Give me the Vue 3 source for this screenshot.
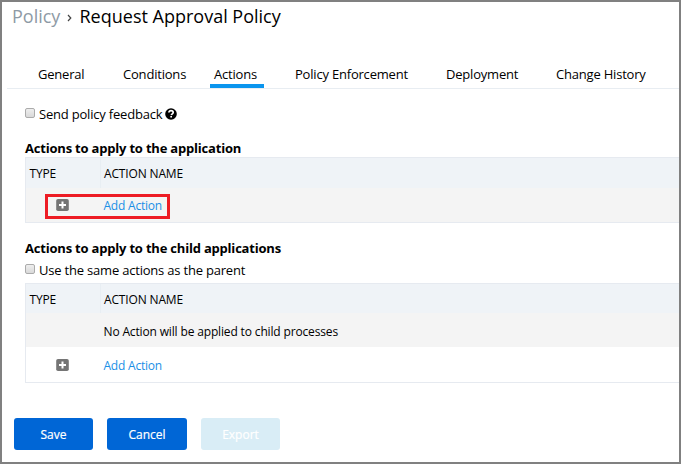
<script setup>
const tabs = [
  { id: 'general', label: 'General' },
  { id: 'conditions', label: 'Conditions' },
  { id: 'actions', label: 'Actions', active: true },
  { id: 'enforcement', label: 'Policy Enforcement' },
  { id: 'deployment', label: 'Deployment' },
  { id: 'history', label: 'Change History' },
]
</script>

<template>
  <div class="page">
    <header class="crumbs">
      <span class="parent">Policy</span>
      <svg class="chevron" viewBox="0 0 5 8"><path d="M1 1l2.8 3L1 7" fill="none" stroke="#444" stroke-width="1.2" /></svg>
      <span class="current">Request Approval Policy</span>
    </header>

    <nav class="tabs">
      <a v-for="t in tabs" :key="t.id" class="tab" :class="[t.id, { active: t.active }]"><span>{{ t.label }}</span></a>
    </nav>

    <main class="content">
      <label class="check feedback">
        <i class="box"></i><span class="text">Send policy feedback</span>
        <svg class="help" viewBox="0 0 12 12"><circle cx="6" cy="6" r="5.8" fill="#000" /><path d="M3.9 4.5C4.1 3 5 2.6 6 2.6c1.3 0 2.2.7 2.2 1.8 0 1.4-1.7 1.5-1.9 2.8" fill="none" stroke="#fff" stroke-width="1.7" /><path d="M5.3 8h1.7v1.6H5.3z" fill="#fff" /></svg>
      </label>

      <h2 class="first-title"><span>Actions to apply to the application</span></h2>
      <section class="table one">
        <div class="row head"><div class="type"><span>TYPE</span></div><div class="name"><span>ACTION NAME</span></div></div>
        <div class="row add shaded">
          <div class="icon"><svg class="plus" viewBox="0 0 13 12"><rect x=".2" width="12.6" height="12" rx="1.8" fill="#757575" /><path d="M6.5 2.5v7M3 6h7" stroke="#fff" stroke-width="2" /></svg></div>
          <a class="link">Add Action</a>
          <div class="highlight"></div>
        </div>
      </section>

      <h2 class="second-title"><span>Actions to apply to the child applications</span></h2>
      <label class="check same"><i class="box"></i><span class="text">Use the same actions as the parent</span></label>
      <section class="table two">
        <div class="row head"><div class="type"><span>TYPE</span></div><div class="name"><span>ACTION NAME</span></div></div>
        <div class="row shaded"><div class="icon"></div><span class="empty">No Action will be applied to child processes</span></div>
        <div class="row add last">
          <div class="icon"><svg class="plus" viewBox="0 0 13 12"><rect x=".2" width="12.6" height="12" rx="1.8" fill="#757575" /><path d="M6.5 2.5v7M3 6h7" stroke="#fff" stroke-width="2" /></svg></div>
          <a class="link">Add Action</a>
        </div>
      </section>
    </main>

    <footer class="buttons">
      <button class="save">Save</button>
      <button class="cancel">Cancel</button>
      <button class="export" disabled>Export</button>
    </footer>
  </div>
</template>

<style>
body { background: #fff; overflow: hidden; }
</style>

<style scoped>
.page { box-sizing: border-box; width: 681px; height: 464px; border: 2px solid #808080; background: #fff; font-family: "Open Sans", sans-serif; font-size: 13px; color: #000; white-space: nowrap; overflow: hidden; }
svg { display: block; flex: none; }
.crumbs { display: flex; align-items: center; box-sizing: border-box; height: 31px; padding: 0 0 2px 10px; font-size: 18px; line-height: 29px; }
.parent { width: 49px; color: #8e9aa5; }
.chevron { width: 5px; height: 8px; margin: 2px 7.5px 0 6px; }
.tabs { display: flex; height: 55px; margin-left: 5px; border-bottom: 1px solid #e8edf2; letter-spacing: -0.2px; }
.tab { display: flex; align-items: flex-end; box-sizing: border-box; height: 55px; line-height: 18px; padding-bottom: 5px; }
.general { width: 85px; margin-left: 31px; }
.conditions { width: 87px; }
.actions { width: 54px; padding: 0 0 1px 4px; border-bottom: 4px solid #0a95ee; }
.enforcement { width: 151px; margin-left: 31px; }
.deployment { width: 110px; }
.content { padding-left: 23px; }
.check { display: flex; align-items: center; height: 18px; letter-spacing: -0.2px; }
.feedback { margin-top: 16px; }
.box { box-sizing: border-box; width: 10px; height: 10px; margin: -2px 4px 0 0; border: 1px solid #ababab; border-radius: 2px; background: linear-gradient(#eee, #d9d9d9); }
.help { width: 12px; height: 12px; margin-left: 3px; }
h2 { margin: 0; height: 18px; font-size: 13px; line-height: 18px; font-weight: 700; letter-spacing: -0.2px; }
.first-title { margin-top: 16px; }
.second-title { margin-top: 16px; }
.same { margin-top: 4px; }
.table { box-sizing: border-box; border: 1px solid #e6eaf0; border-right: 0; font-size: 12px; letter-spacing: -0.15px; }
.one { height: 66px; }
.two { height: 100px; margin-top: 4px; }
.row { display: flex; align-items: center; height: 34px; position: relative; }
.head { height: 30px; background: #eff3f7; }
.two .head { height: 29px; }
.last { height: 35px; }
.type { box-sizing: border-box; width: 75px; height: 100%; padding: 0 0 0 3.5px; border-right: 1px solid #e8eef3; line-height: 31px; }
.name { padding-left: 3px; line-height: 31px; }
.two .type, .two .name { line-height: 32px; }
.two .name { padding-top: 2px; }
.shaded { background: #f4f4f4; }
.icon { display: flex; width: 47px; padding-left: 30px; }
.icon + * { padding-left: 0.5px; }
.two .empty, .two .link { padding-top: 2px; }
.plus { width: 13px; height: 12px; }
.link { color: #1a8fe6; letter-spacing: -0.22px; }
.highlight { position: absolute; box-sizing: border-box; left: 19px; top: 6px; width: 125px; height: 25px; border: 3px solid #ed1c24; }
.buttons { display: flex; gap: 14px; margin: 35px 0 0 12px; }
button { width: 79px; height: 32px; padding: 2px 0 0; border: 0; border-radius: 3px; background: #0066d6; color: #fff; font: 400 12px/30px "Open Sans", sans-serif; -webkit-text-stroke: 0.2px #fff; }
.cancel { width: 80px; }
.export { background: #d9edf6; color: #fff; }
</style>
